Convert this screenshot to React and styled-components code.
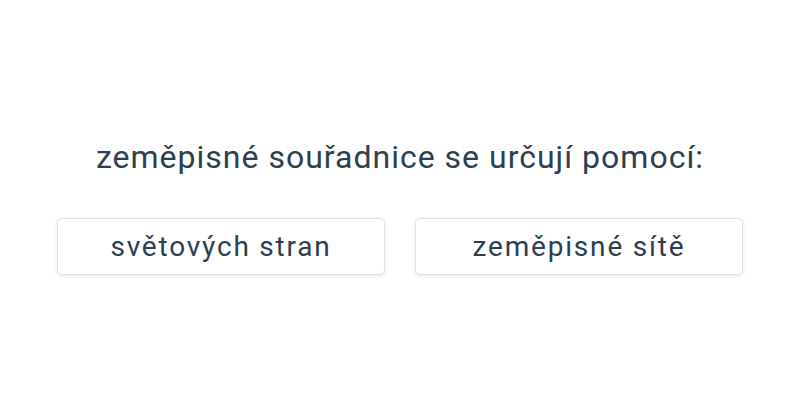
import React from "react";
import styled, { createGlobalStyle } from "styled-components";

const Global = createGlobalStyle`
  html, body { margin: 0; padding: 0; background: #ffffff; }
  body { font-family: Roboto, "Noto Sans", sans-serif; }
`;

const Page = styled.div`
  width: 800px;
  height: 400px;
  display: flex;
  flex-direction: column;
  align-items: center;
  justify-content: center;
  box-sizing: border-box;
  padding-top: 14px;
`;

const Question = styled.h1`
  margin: 0 0 43px;
  font-size: 32px;
  font-weight: 400;
  letter-spacing: 1px;
  color: #2c3e50;
  line-height: 36px;
  text-align: center;
`;

const Options = styled.div`
  display: grid;
  grid-template-columns: 328px 328px;
  gap: 30px;
`;

const Option = styled.button`
  height: 57px;
  background: #fff;
  border: 1px solid #e0e0e0;
  border-radius: 5px;
  box-shadow: 0 1px 4px rgba(0, 0, 0, 0.1);
  font-family: Roboto, sans-serif;
  font-size: 28px;
  letter-spacing: 1.8px;
  color: #2c3e50;
  cursor: pointer;
`;

export default function App() {
  return (
    <>
      <Global />
      <Page>
        <Question>zeměpisné souřadnice se určují pomocí:</Question>
        <Options>
          <Option>světových stran</Option>
          <Option>zeměpisné sítě</Option>
        </Options>
      </Page>
    </>
  );
}
